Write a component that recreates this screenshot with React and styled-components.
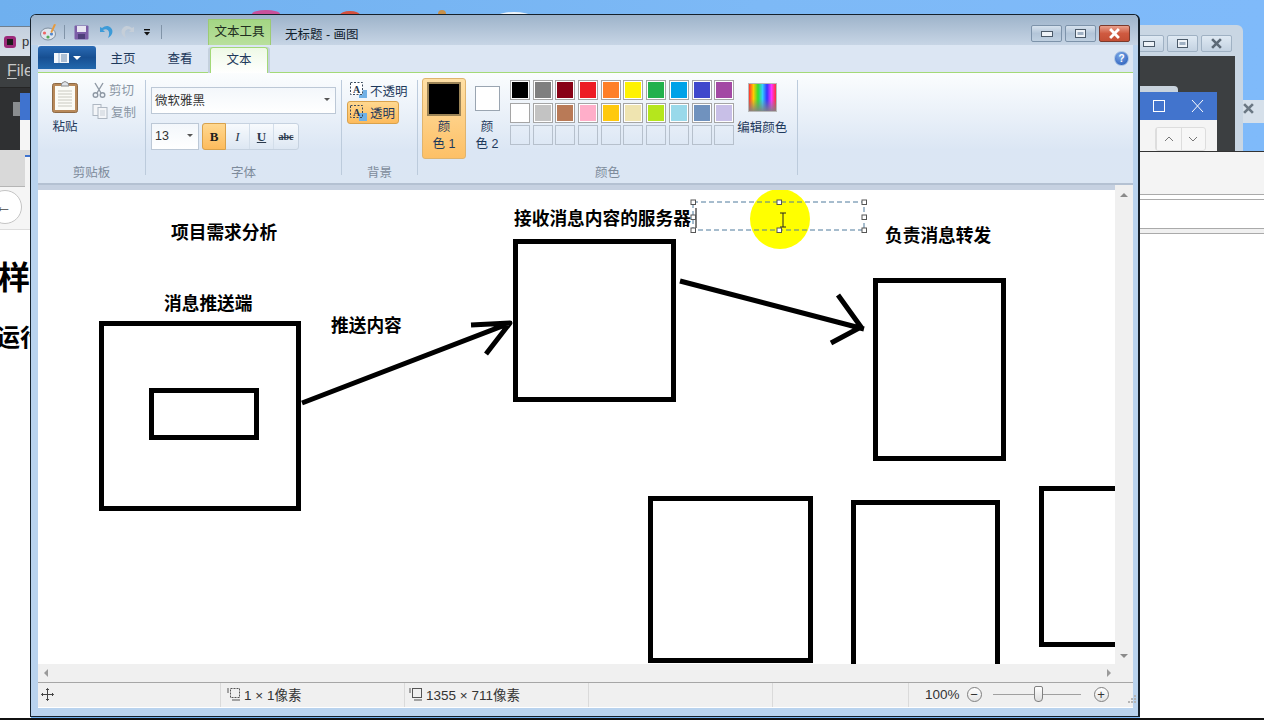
import React from 'react';
import styled, { createGlobalStyle } from 'styled-components';

const CJK = '"Liberation Sans", "Noto Sans CJK SC", sans-serif';

const GlobalStyle = createGlobalStyle`
  html, body { margin: 0; padding: 0; background: #7fb8f5; }
  body { font-family: ${CJK}; }
`;

const PALETTE = [
  ['#000000', '#7f7f7f', '#880015', '#ed1c24', '#ff7f27', '#fff200', '#22b14c', '#00a2e8', '#3f48cc', '#a349a4'],
  ['#ffffff', '#c3c3c3', '#b97a57', '#ffaec9', '#ffc90e', '#efe4b0', '#b5e61d', '#99d9ea', '#7092be', '#c8bfe7'],
  Array(10).fill(null),
];

const Desktop = styled.div`
  position: relative;
  width: 1264px;
  height: 720px;
  overflow: hidden;
  background: linear-gradient(90deg, #6fb0ef 0%, #7db9f6 60%, #7fbafa 100%);
`;

const BottomEdge = styled.div`
  position: absolute;
  left: 0;
  right: 0;
  bottom: 0;
  height: 2px;
  background: #111;
`;

/* windows lying behind paint */
const BackWindow = styled.div`
  position: absolute;
  left: ${(p) => p.$left}px;
  top: ${(p) => p.$top}px;
  width: ${(p) => p.$width}px;
  height: ${(p) => p.$height}px;
  background: ${(p) => p.$bg};
  border-radius: ${(p) => p.$radius || '0'};
  overflow: hidden;
`;

const LeftTitle = styled.div`
  height: 30px;
  box-sizing: border-box;
  display: flex;
  align-items: center;
  padding-left: 3px;
  gap: 5px;
  font-size: 13px;
  color: #333;
  background: linear-gradient(#c4d0de, #d8dfe8);
  border-top: 1px solid #6f7f8f;
`;

const LeftMenu = styled.div`
  height: 32px;
  box-sizing: border-box;
  background: #3c3f41;
  color: #c8c8c8;
  font-size: 16px;
  line-height: 30px;
  padding-left: 7px;
  border-bottom: 1px solid #252525;
  u { text-underline-offset: 2px; }
`;

const LeftToolbar = styled.div`
  height: 62px;
  background: #2f3032;
  display: flex;
  align-items: flex-start;
  padding: 5px 0 0 13px;
  box-sizing: border-box;
`;

const LeftChip = styled.div`
  width: 7px;
  height: 14px;
  margin-top: 9px;
  background: #8a8d90;
`;

const LeftBlue = styled.div`
  width: 11px;
  height: 57px;
  background: linear-gradient(#3f73cf 0 47%, #f5f5f5 47%);
`;

const LeftGray = styled.div`
  height: 37px;
  box-sizing: border-box;
  background: #d9d9d9;
  border-bottom: 1px solid #b5b5b5;
  padding: 5px 0 0 25px;
`;

const LeftGrayTab = styled.div`
  height: 100%;
  background: #f4f4f4;
  border-top: 2px solid #3f73cf;
`;

const LeftNav = styled.div`
  height: 43px;
  box-sizing: border-box;
  background: #f5f5f5;
  border-bottom: 1px solid #ddd;
  padding-top: 3px;
`;

const BackCircle = styled.div`
  width: 34px;
  height: 34px;
  margin-left: -12px;
  border: 1px solid #c4c4c4;
  border-radius: 50%;
  background: #fff;
  color: #444;
  font-size: 17px;
  display: flex;
  align-items: center;
  justify-content: flex-end;
  padding-right: 9px;
  box-sizing: border-box;
`;

const PageText = styled.div`
  margin: ${(p) => p.$top}px 0 0 ${(p) => p.$left}px;
  font-size: ${(p) => p.$size}px;
  line-height: 1;
  font-weight: 700;
  color: #000;
  white-space: nowrap;
`;

const RightButtons = styled.div`
  display: flex;
  gap: 3px;
  padding: 10px 0 0 0;
  margin-left: -7px;
`;

const GhostButton = styled.div`
  width: ${(p) => p.$w || 31}px;
  height: 17px;
  box-sizing: border-box;
  border: 1px solid #9fb1c3;
  border-radius: 2px;
  background: linear-gradient(#dfe9f3, #c3d2e1);
  display: flex;
  align-items: center;
  justify-content: center;
`;

const RightDark = styled.div`
  position: absolute;
  left: 0;
  top: 31px;
  width: 95px;
  height: 95px;
  background: #3c3f41;
`;

const RightTab = styled.div`
  position: absolute;
  left: 0;
  top: 61px;
  width: 38px;
  height: 6px;
  border-radius: 0 4px 0 0;
  background: #c9d3dd;
`;

const BlueBar = styled.div`
  position: absolute;
  left: 0;
  top: 67px;
  width: 77px;
  height: 28px;
  background: #4274cd;
  color: #fff;
`;

const RightTools = styled.div`
  position: absolute;
  left: 0;
  top: 95px;
  width: 77px;
  height: 31px;
  background: #f4f4f4;
`;

const SpinBox = styled.div`
  position: absolute;
  left: 15px;
  top: 7px;
  width: 51px;
  height: 24px;
  display: flex;
  box-sizing: border-box;
  border: 1px solid #ddd;
  border-radius: 3px;
  background: #f7f7f7;
`;

const SpinCell = styled.div`
  flex: 1;
  display: flex;
  align-items: center;
  justify-content: center;
  border-left: 1px solid #ddd;
`;

const RightLines = styled.div`
  height: 44px;
  box-sizing: border-box;
  background: #f4f4f4;
  border-top: 1px solid #333;
  border-bottom: 1px solid #aaa;
`;

const RightField = styled.div`
  height: 28px;
  background: #fff;
  border-top: 1px solid #aaa;
  margin-top: 4px;
  border-bottom: 1px solid #aaa;
`;

const RightFoot = styled.div`
  height: 4px;
  background: #f0f0f0;
  border-bottom: 1px solid #aaa;
`;

const Blob = styled.div`
  position: absolute;
  left: ${(p) => p.$left}px;
  top: ${(p) => p.$top}px;
  width: ${(p) => p.$w}px;
  height: 8px;
  border-radius: 50% 50% 0 0;
  background: ${(p) => p.$color};
`;

/* paint window */
const Frame = styled.div`
  position: absolute;
  left: 30px;
  top: 14px;
  width: 1110px;
  height: 703px;
  box-sizing: border-box;
  border: 1px solid #15212c;
  border-right-width: 2px;
  border-radius: 6px 6px 0 0;
  background: #b9d3ee;
  display: flex;
  flex-direction: column;
`;

const TitleBar = styled.div`
  height: 30px;
  flex: none;
  display: flex;
  border-radius: 5px 5px 0 0;
  background: linear-gradient(#9db3ca, #c7d5e5);
  font-size: 12.5px;
`;

const QuickAccess = styled.div`
  width: 177px;
  flex: none;
  display: flex;
  align-items: center;
  padding: 4px 0 0 9px;
  box-sizing: border-box;
`;

const QuickIcon = styled.span`
  display: inline-flex;
  flex: none;
  width: ${(p) => p.$w}px;
  margin-left: ${(p) => p.$ml || 0}px;
  justify-content: center;
`;

const QuickSep = styled.span`
  width: 1px;
  height: 14px;
  flex: none;
  margin: ${(p) => p.$m};
  background: #8194a8;
`;

const ToolTab = styled.div`
  align-self: flex-end;
  width: 63px;
  height: 26px;
  box-sizing: border-box;
  border: 1px solid #9ccb73;
  border-bottom: 0;
  background: linear-gradient(#a3d684, #b9e09d);
  color: #1f2f1f;
  text-align: center;
  line-height: 24px;
  flex: none;
`;

const WindowTitle = styled.div`
  margin: 9px 0 0 14px;
  color: #10202c;
  white-space: nowrap;
  flex: 1;
`;

const WindowButtons = styled.div`
  display: flex;
  gap: 3px;
  padding: 10px 8px 0 0;
`;

const WinButton = styled.div`
  width: 31px;
  height: 17px;
  box-sizing: border-box;
  border: 1px solid ${(p) => (p.$close ? '#7c3a2c' : '#7d93aa')};
  border-radius: 2px;
  background: ${(p) =>
    p.$close
      ? 'linear-gradient(#e9a08c, #cf5a40 50%, #c44f35)'
      : 'linear-gradient(#d6e2ee, #b3c5d8 50%, #bfd0e1)'};
  display: flex;
  align-items: center;
  justify-content: center;
`;

const Body = styled.div`
  flex: 1;
  display: flex;
  flex-direction: column;
  padding: 0 5px 8px 7px;
  min-height: 0;
`;

const TabRow = styled.div`
  height: 27px;
  flex: none;
  display: flex;
  align-items: flex-end;
  background: #dce6f3;
  border-bottom: 1px solid #a3d977;
  font-size: 12.5px;
  color: #1e395b;
  position: relative;
`;

const FileButton = styled.div`
  width: 58px;
  height: 23px;
  align-self: flex-start;
  margin-top: 1px;
  border-radius: 3px 3px 0 0;
  background: linear-gradient(#2a6bb5, #174f92 50%, #2268ad);
  display: flex;
  align-items: center;
  justify-content: center;
  gap: 4px;
  flex: none;
`;

const Tab = styled.div`
  width: ${(p) => p.$w}px;
  height: 25px;
  box-sizing: border-box;
  text-align: center;
  line-height: 25px;
  flex: none;
  ${(p) =>
    p.$active &&
    `
    height: 26px;
    margin-bottom: -1px;
    background: linear-gradient(#eef9e6, #fff);
    border: 1px solid #a3d977;
    border-bottom: 0;
    border-radius: 3px 3px 0 0;
    box-shadow: -2px 0 0 #c4d0de, 2px 0 0 #c4d0de;
  `}
`;

const HelpDot = styled.div`
  position: absolute;
  right: 4px;
  top: 6px;
  width: 15px;
  height: 15px;
  border-radius: 50%;
  border: 1px solid #a9c4e6;
  box-sizing: border-box;
  background: radial-gradient(circle at 40% 30%, #7ea9e8, #1f55b5);
  color: #fff;
  font-size: 10px;
  font-weight: 700;
  line-height: 13px;
  text-align: center;
`;

const Ribbon = styled.div`
  height: 112px;
  flex: none;
  display: flex;
  background: linear-gradient(#fbfdfe, #dbe6f4 70%, #dbe6f3);
  border-bottom: 2px solid #b4c1d2;
  box-sizing: border-box;
  font-size: 12.5px;
  color: #1e395b;
`;

const Group = styled.div`
  width: ${(p) => p.$w}px;
  flex: none;
  box-sizing: border-box;
  margin: 7px 0 8px 0;
  border-right: 1px solid #bccbdc;
  display: flex;
  flex-direction: column;
`;

const GroupBody = styled.div`
  flex: 1;
  display: flex;
  min-height: 0;
  padding: ${(p) => p.$pad || '0'};
`;

const GroupLabel = styled.div`
  height: 16px;
  line-height: 16px;
  text-align: center;
  color: #7d8b9b;
  flex: none;
  margin-bottom: -6px;
`;

const PasteButton = styled.div`
  width: 54px;
  flex: none;
  display: flex;
  flex-direction: column;
  align-items: center;
  padding-top: 1px;
  gap: 3px;
`;

const SmallActions = styled.div`
  display: flex;
  flex-direction: column;
  gap: 5px;
  padding-top: 1px;
`;

const SmallAction = styled.div`
  height: 17px;
  display: flex;
  align-items: center;
  gap: 3px;
  color: #8a96a4;
  white-space: nowrap;
`;

const FontColumn = styled.div`
  display: flex;
  flex-direction: column;
  gap: 9px;
  padding: 7px 0 0 5px;
`;

const FontSelect = styled.div`
  width: ${(p) => p.$w}px;
  height: 27px;
  box-sizing: border-box;
  border: 1px solid #bcc8d6;
  background: linear-gradient(#f3f7fb, #ffffff);
  display: flex;
  align-items: center;
  justify-content: space-between;
  padding: 0 5px 2px 3px;
  color: #333;
  &::after {
    content: '';
    border-left: 3px solid transparent;
    border-right: 3px solid transparent;
    border-top: 3px solid #555;
  }
`;

const FontRow = styled.div`
  display: flex;
  gap: 3px;
`;

const StyleButtons = styled.div`
  display: flex;
  height: 25px;
  border: 1px solid #c6d2e0;
  border-radius: 3px;
  background: linear-gradient(#f7fafd, #dde7f3);
`;

const StyleButton = styled.div`
  width: 24px;
  display: flex;
  align-items: center;
  justify-content: center;
  box-sizing: border-box;
  font-family: "Liberation Serif", serif;
  font-size: ${(p) => p.$size || 13}px;
  font-weight: ${(p) => (p.$italic ? 400 : 700)};
  font-style: ${(p) => (p.$italic ? 'italic' : 'normal')};
  text-decoration: ${(p) => p.$line || 'none'};
  color: #2b3a4d;
  border-right: 1px solid #d3deea;
  &:last-child { border-right: 0; }
  ${(p) =>
    p.$on &&
    `
    background: linear-gradient(#ffd890, #fdbb5c);
    border: 1px solid #d9a24c;
    border-radius: 3px 0 0 3px;
    margin: -1px 0 -1px -1px;
    color: #1d1d1d;
  `}
`;

const OpacityColumn = styled.div`
  display: flex;
  flex-direction: column;
  gap: 2px;
  padding-left: 5px;
`;

const OpacityOption = styled.div`
  width: 52px;
  height: ${(p) => (p.$on ? 23 : 18)}px;
  box-sizing: border-box;
  display: flex;
  align-items: center;
  gap: 3px;
  white-space: nowrap;
  padding-left: ${(p) => (p.$on ? 2 : 3)}px;
  svg { flex: none; }
  ${(p) =>
    p.$on &&
    `
    background: linear-gradient(#ffd890, #fdbb5c);
    border: 1px solid #d9a24c;
    border-radius: 3px;
  `}
`;

const ColorButton = styled.div`
  width: ${(p) => (p.$on ? 44 : 30)}px;
  height: 81px;
  margin: -2px ${(p) => (p.$on ? 6 : 8)}px 0 ${(p) => (p.$on ? 4 : 0)}px;
  box-sizing: border-box;
  flex: none;
  display: flex;
  flex-direction: column;
  align-items: center;
  text-align: center;
  line-height: 17px;
  padding-top: ${(p) => (p.$on ? 3 : 8)}px;
  border-radius: 3px;
  color: #1e395b;
  ${(p) =>
    p.$on &&
    `
    background: linear-gradient(#ffe0a6, #fdc066);
    border: 1px solid #dfb46f;
  `}
`;

const ColorPreview = styled.div`
  width: ${(p) => p.$size}px;
  height: ${(p) => p.$size}px;
  flex: none;
  box-sizing: border-box;
  background: ${(p) => p.$color};
  border: ${(p) => (p.$on ? '2px solid #9c8456' : '1px solid #9aa5b1')};
  margin-bottom: ${(p) => (p.$on ? 3 : 8)}px;
`;

const SwatchGrid = styled.div`
  display: grid;
  grid-template-columns: repeat(10, 20px);
  grid-auto-rows: 20px;
  gap: 2.7px;
  flex: none;
  align-self: flex-start;
`;

const Swatch = styled.div`
  box-sizing: border-box;
  border: 1px solid ${(p) => (p.$color ? '#a5a5a5' : '#b6c0cc')};
  background: ${(p) => p.$color || 'transparent'};
  box-shadow: ${(p) => (p.$color ? 'inset 0 0 0 1px #fff' : 'none')};
`;

const EditColor = styled.div`
  display: flex;
  flex-direction: column;
  align-items: center;
  gap: 5px;
  margin: 3px 0 0 3px;
  white-space: nowrap;
`;

const RainbowBox = styled.div`
  width: 29px;
  height: 29px;
  box-sizing: border-box;
  border: 1px solid #b8b8b8;
  background:
    linear-gradient(rgba(255, 255, 255, 0) 55%, rgba(130, 130, 130, 0.9)),
    linear-gradient(90deg, #f33, #fc0, #3d3, #3cf, #33f, #f3f, #f33);
`;

const WorkRow = styled.div`
  flex: 1;
  min-height: 0;
  display: flex;
  background: #c6d1e1;
  padding-top: 5px;
`;

const CanvasWrap = styled.div`
  flex: 1;
  background: #fff;
  overflow: hidden;
  position: relative;
`;

const CanvasSvg = styled.svg`
  display: block;
`;

const CanvasLabel = styled.div`
  position: absolute;
  left: ${(p) => p.$x - 38}px;
  top: ${(p) => p.$y - 190}px;
  font-size: 17.7px;
  line-height: 24px;
  font-weight: 700;
  color: #000;
  white-space: nowrap;
  font-family: "Noto Sans CJK SC", sans-serif;
`;

const VScroll = styled.div`
  width: 18px;
  margin-top: -5px;
  flex: none;
  background: #f0f0f0;
  display: flex;
  flex-direction: column;
  justify-content: space-between;
  align-items: center;
  padding: 8px 0 6px;
  box-sizing: border-box;
`;

const HScroll = styled.div`
  height: 18px;
  flex: none;
  background: #f0f0f0;
  display: flex;
  justify-content: space-between;
  align-items: center;
  padding: 0 22px 0 6px;
`;

const Arrow = styled.span`
  width: 0;
  height: 0;
  border-style: solid;
  border-color: transparent;
  ${(p) => (p.$dir === 'up' ? 'border-width: 0 4px 4px; border-bottom-color: #8a8a8a;' : '')}
  ${(p) => (p.$dir === 'down' ? `border-width: 4px 4px 0; border-top-color: ${p.$color || '#8a8a8a'};` : '')}
  ${(p) => (p.$dir === 'left' ? 'border-width: 4px 4px 4px 0; border-right-color: #9a9a9a;' : '')}
  ${(p) => (p.$dir === 'right' ? 'border-width: 4px 0 4px 4px; border-left-color: #9a9a9a;' : '')}
`;

const StatusBar = styled.div`
  height: 26px;
  flex: none;
  display: flex;
  box-sizing: border-box;
  background: #f0f0f0;
  border-top: 1px solid #a6a6a6;
  border-bottom: 1px solid #fff;
  font-size: 13.5px;
  color: #333;
`;

const StatusCell = styled.div`
  width: ${(p) => p.$w}px;
  flex: ${(p) => (p.$w ? 'none' : 1)};
  box-sizing: border-box;
  border-right: ${(p) => (p.$w ? '1px solid #dadada' : '0')};
  display: flex;
  align-items: center;
  gap: ${(p) => (p.$tight ? 0 : 3)}px;
  padding: 0 0 2px ${(p) => p.$pad || 6}px;
  white-space: nowrap;
`;

const ZoomButton = styled.div`
  width: 15px;
  height: 15px;
  margin-left: ${(p) => p.$ml || 0}px;
  box-sizing: border-box;
  border: 1px solid #808080;
  border-radius: 50%;
  display: flex;
  align-items: center;
  justify-content: center;
  color: #333;
  font-size: 13px;
  line-height: 1;
  background: linear-gradient(#fff, #e4e4e4);
  flex: none;
`;

const ZoomTrack = styled.div`
  width: 88px;
  height: 1px;
  margin: 0 13px 0 11px;
  background: #a0a0a0;
  position: relative;
  flex: none;
`;

const ZoomThumb = styled.div`
  position: absolute;
  left: 41px;
  top: -8px;
  width: 9px;
  height: 16px;
  box-sizing: border-box;
  border: 1px solid #808080;
  border-radius: 2px 2px 4px 4px;
  background: linear-gradient(#fff, #ddd);
`;

const SizeGrip = styled.svg`
  margin: 10px 0 0 19px;
  flex: none;
`;

/* small drawings */
const PaintIcon = () => (
  <svg width="18" height="18" viewBox="0 0 18 18">
    <ellipse cx="8" cy="11" rx="7.5" ry="6" fill="#dfe6ee" stroke="#7f8f9f" />
    <circle cx="4.5" cy="10" r="1.6" fill="#e66" />
    <circle cx="8" cy="14" r="1.6" fill="#5a5" />
    <circle cx="11.5" cy="11" r="1.6" fill="#58c" />
    <path d="M14 1 L16 1.5 L12 10 L10.5 9 Z" fill="#e79a3c" />
  </svg>
);

const SaveIcon = () => (
  <svg width="15" height="15" viewBox="0 0 15 15">
    <rect x="0.5" y="0.5" width="14" height="14" rx="1" fill="#7c5ea7" />
    <rect x="3" y="1" width="9" height="6" fill="#e8e6f2" />
    <rect x="4" y="9" width="7" height="5" fill="#4e3f7a" />
  </svg>
);

const UndoIcon = ({ color, flip }) => (
  <svg width="15" height="14" viewBox="0 0 15 14" style={flip ? { transform: 'scaleX(-1)' } : undefined}>
    <path d="M1 2 L1 7 L6 7 L4 5 C7 3 11 5 10 10 L9 13 C13 11 15 6 12 3 C9 0 6 1 3 3 Z" fill={color} />
  </svg>
);

const Caret = () => (
  <svg width="8" height="7" viewBox="0 0 8 7">
    <rect x="1" y="0" width="6" height="1.4" fill="#111" />
    <path d="M1 3 L7 3 L4 6.5 Z" fill="#111" />
  </svg>
);

const ClipboardIcon = () => (
  <svg width="26" height="32" viewBox="0 0 26 32">
    <rect x="0.5" y="2.5" width="25" height="29" rx="2" fill="#b8895a" stroke="#8e6a45" />
    <rect x="3" y="5" width="20" height="24" fill="#fbfbf6" />
    <path d="M6 10H20M6 13H20M6 16H20M6 19H20M6 22H20M6 25H20" stroke="#c9c9c0" />
    <path d="M9 5 L10 2 L13 0.5 L16 2 L17 5 Z" fill="#dfe3e8" stroke="#8a8a8a" />
  </svg>
);

const ScissorsIcon = () => (
  <svg width="14" height="16" viewBox="0 0 14 16" fill="none" stroke="#8f99a5" strokeWidth="1.4">
    <path d="M3 1 L9 11 M11 1 L5 11" />
    <circle cx="3.5" cy="13" r="2.3" />
    <circle cx="10.5" cy="13" r="2.3" />
  </svg>
);

const CopyIcon = () => (
  <svg width="16" height="15" viewBox="0 0 16 15" fill="#f3f5f8" stroke="#aeb7c2">
    <rect x="1" y="0.5" width="8" height="11" />
    <rect x="6" y="3.5" width="9" height="11" />
    <path d="M8 7H13M8 9H13M8 11H13" stroke="#c9d0d8" />
  </svg>
);

const OpacityIcon = ({ solid }) => (
  <svg width="17" height="16" viewBox="0 0 17 16">
    <rect x="9" y="8" width="8" height="8" fill="#6fb0e6" />
    <rect x="0.5" y="0.5" width="12" height="12" fill={solid ? '#fff' : 'none'} stroke="#3b4a5c" strokeDasharray="2 1.5" />
    <text x="3" y="10.5" fontSize="10" fontWeight="700" fontFamily="Liberation Serif, serif" fill="#27364a">A</text>
  </svg>
);

const GlyphX = ({ color = '#44505c', size = 10, width = 2 }) => (
  <svg width={size} height={size} viewBox="0 0 10 10">
    <path d="M1 1 L9 9 M9 1 L1 9" stroke={color} strokeWidth={width} fill="none" />
  </svg>
);

const GlyphMin = () => (
  <svg width="12" height="6" viewBox="0 0 12 6">
    <rect x="0.5" y="0.5" width="11" height="5" fill="#eef3f8" stroke="#4b5a69" />
  </svg>
);

const GlyphMax = () => (
  <svg width="11" height="9" viewBox="0 0 11 9">
    <rect x="0.5" y="0.5" width="10" height="8" fill="#eef3f8" stroke="#4b5a69" />
    <rect x="2.5" y="3" width="6" height="3" fill="#9fb0c2" />
  </svg>
);

const Chevron = ({ up }) => (
  <svg width="10" height="6" viewBox="0 0 10 6" fill="none" stroke="#777">
    <path d={up ? 'M1 5 L5 1 L9 5' : 'M1 1 L5 5 L9 1'} />
  </svg>
);

const SizeIcon = ({ filled }) => (
  <svg width="14" height="14" viewBox="0 0 14 14" fill="none" stroke="#555">
    <rect x="3.5" y="1.5" width="9" height="9" strokeDasharray={filled ? 'none' : '2 1'} />
    <path d="M1 1V6M5 13H13" />
  </svg>
);

const HANDLES = [
  [693, 202], [779, 202], [864, 202],
  [693, 217], [864, 217],
  [693, 230], [779, 230], [864, 230],
];

const LABELS = [
  { x: 171, y: 219, text: '项目需求分析' },
  { x: 164, y: 290, text: '消息推送端' },
  { x: 331, y: 312, text: '推送内容' },
  { x: 514, y: 205, text: '接收消息内容的服务器' },
  { x: 885, y: 222, text: '负责消息转发' },
];

const Drawing = () => (
  <CanvasSvg width="1077" height="474" viewBox="38 190 1077 474">
    <circle cx="780" cy="219" r="30" fill="#ffff00" />
    <g fill="none" stroke="#000" strokeWidth="5">
      <rect x="101.5" y="323.5" width="197" height="185" />
      <rect x="151.5" y="390.5" width="105" height="47" />
      <rect x="515.5" y="241.5" width="158" height="158" />
      <rect x="875.5" y="280.5" width="128" height="178" />
      <rect x="650.5" y="498.5" width="160" height="162" />
      <rect x="853.5" y="502.5" width="144" height="180" />
      <rect x="1041.5" y="488.5" width="120" height="156" />
      <path d="M302 403 L510 323 M471 325 L510 323 L486 354" strokeLinejoin="round" />
      <path d="M680 281 L864 329 M838 295 L861 327 L831 343" strokeLinejoin="round" />
    </g>
    <rect x="693" y="202" width="171" height="28" fill="none" stroke="#4f7a9c" strokeDasharray="5 3" />
    <path d="M696 208 V228" stroke="#000" strokeWidth="1" />
    {HANDLES.map(([x, y]) => (
      <rect key={`${x}-${y}`} x={x - 2} y={y - 2} width="4.5" height="4.5" fill="#fff" stroke="#555" />
    ))}
    <path d="M780 213 H786 M783 213 V227 M780 227 H786" stroke="#222" strokeWidth="1" fill="none" />
  </CanvasSvg>
);

const App = () => (
  <Desktop>
    <GlobalStyle />
    <Blob $left={252} $top={10} $w={28} $color="#c9509a" />
    <Blob $left={340} $top={11} $w={20} $color="#d5503c" />
    <Blob $left={438} $top={10} $w={8} $color="#c89048" />
    <Blob $left={498} $top={12} $w={32} $color="#eef3f8" />

    <BackWindow $left={0} $top={26} $width={31} $height={692} $bg="#ffffff">
      <LeftTitle>
        <svg width="14" height="14" viewBox="0 0 14 14" style={{ flex: 'none' }}>
          <rect x="1" y="1" width="12" height="12" rx="3" fill="#9c2a7a" />
          <rect x="4" y="4" width="6" height="6" fill="#1b1b1b" />
        </svg>
        p
      </LeftTitle>
      <LeftMenu>
        <u>F</u>ile
      </LeftMenu>
      <LeftToolbar>
        <LeftChip />
        <LeftBlue />
      </LeftToolbar>
      <LeftGray>
        <LeftGrayTab />
      </LeftGray>
      <LeftNav>
        <BackCircle>←</BackCircle>
      </LeftNav>
      <PageText $top={32} $left={-2} $size={32}>样式</PageText>
      <PageText $top={32} $left={-4} $size={24}>运行</PageText>
    </BackWindow>

    <BackWindow $left={1140} $top={25} $width={103} $height={126} $bg="#c9d6e3" $radius="0 6px 0 0">
      <RightButtons>
        <GhostButton $w={31}><GlyphMin /></GhostButton>
        <GhostButton $w={31}><GlyphMax /></GhostButton>
        <GhostButton $w={31}><GlyphX color="#5d6a77" size={11} width={2.4} /></GhostButton>
      </RightButtons>
      <RightDark />
      <RightTab />
      <BlueBar>
        <svg width="77" height="28" viewBox="0 0 77 28" fill="none" stroke="#fff">
          <rect x="13.5" y="8.5" width="11" height="11" />
          <path d="M52 8 L63 20 M63 8 L52 20" />
        </svg>
      </BlueBar>
      <RightTools>
        <SpinBox>
          <SpinCell><Chevron up /></SpinCell>
          <SpinCell><Chevron /></SpinCell>
        </SpinBox>
      </RightTools>
    </BackWindow>

    <BackWindow $left={1243} $top={100} $width={21} $height={23} $bg="#d6e0ea">
      <GlyphX color="#6a7783" size={11} width={2.4} />
    </BackWindow>

    <BackWindow $left={1140} $top={151} $width={124} $height={567} $bg="#ffffff">
      <RightLines />
      <RightField />
      <RightFoot />
    </BackWindow>

    <BottomEdge />

    <Frame>
      <TitleBar>
        <QuickAccess>
          <QuickIcon $w={18}><PaintIcon /></QuickIcon>
          <QuickSep $m="0 9px 0 6px" />
          <QuickIcon $w={15}><SaveIcon /></QuickIcon>
          <QuickIcon $w={24} $ml={5}><UndoIcon color="#3d9bd8" /></QuickIcon>
          <QuickIcon $w={18}><UndoIcon color="#c5ced8" flip /></QuickIcon>
          <QuickIcon $w={22}><Caret /></QuickIcon>
          <QuickSep $m="0 0 0 3px" />
        </QuickAccess>
        <ToolTab>文本工具</ToolTab>
        <WindowTitle>无标题 - 画图</WindowTitle>
        <WindowButtons>
          <WinButton><GlyphMin /></WinButton>
          <WinButton><GlyphMax /></WinButton>
          <WinButton $close><GlyphX color="#fff" size={11} width={2.6} /></WinButton>
        </WindowButtons>
      </TitleBar>

      <Body>
        <TabRow>
          <FileButton>
            <svg width="15" height="10" viewBox="0 0 15 10">
              <rect width="15" height="10" fill="#f4f7fb" />
              <path d="M5 0 V10" stroke="#9fb6d2" />
              <path d="M7 2H13M7 4H13M7 6H13M7 8H13" stroke="#6787ad" />
            </svg>
            <Arrow $dir="down" $color="#fff" />
          </FileButton>
          <Tab $w={54}>主页</Tab>
          <Tab $w={60}>查看</Tab>
          <Tab $w={58} $active>文本</Tab>
          <HelpDot>?</HelpDot>
        </TabRow>

        <Ribbon>
          <Group $w={108}>
            <GroupBody>
              <PasteButton>
                <ClipboardIcon />
                粘贴
              </PasteButton>
              <SmallActions>
                <SmallAction><ScissorsIcon />剪切</SmallAction>
                <SmallAction><CopyIcon />复制</SmallAction>
              </SmallActions>
            </GroupBody>
            <GroupLabel>剪贴板</GroupLabel>
          </Group>

          <Group $w={196}>
            <GroupBody>
              <FontColumn>
                <FontSelect $w={185}>微软雅黑</FontSelect>
                <FontRow>
                  <FontSelect $w={48}>13</FontSelect>
                  <StyleButtons>
                    <StyleButton $on>B</StyleButton>
                    <StyleButton $italic>I</StyleButton>
                    <StyleButton $line="underline">U</StyleButton>
                    <StyleButton $size={10} $line="line-through">abc</StyleButton>
                  </StyleButtons>
                </FontRow>
              </FontColumn>
            </GroupBody>
            <GroupLabel>字体</GroupLabel>
          </Group>

          <Group $w={76}>
            <GroupBody $pad="1px 0 0 0">
              <OpacityColumn>
                <OpacityOption><OpacityIcon solid />不透明</OpacityOption>
                <OpacityOption $on><OpacityIcon />透明</OpacityOption>
              </OpacityColumn>
            </GroupBody>
            <GroupLabel>背景</GroupLabel>
          </Group>

          <Group $w={380}>
            <GroupBody>
              <ColorButton $on>
                <ColorPreview $on $size={34} $color="#000" />
                颜<br />色 1
              </ColorButton>
              <ColorButton>
                <ColorPreview $size={25} $color="#fff" />
                颜<br />色 2
              </ColorButton>
              <SwatchGrid>
                {PALETTE.flat().map((color, i) => (
                  <Swatch key={i} $color={color} />
                ))}
              </SwatchGrid>
              <EditColor>
                <RainbowBox />
                编辑颜色
              </EditColor>
            </GroupBody>
            <GroupLabel>颜色</GroupLabel>
          </Group>
        </Ribbon>

        <WorkRow>
          <CanvasWrap>
            <Drawing />
            {LABELS.map((label) => (
              <CanvasLabel key={label.text} $x={label.x} $y={label.y}>
                {label.text}
              </CanvasLabel>
            ))}
          </CanvasWrap>
          <VScroll>
            <Arrow $dir="up" />
            <Arrow $dir="down" />
          </VScroll>
        </WorkRow>

        <HScroll>
          <Arrow $dir="left" />
          <Arrow $dir="right" />
        </HScroll>

        <StatusBar>
          <StatusCell $w={183} $pad={3}>
            <svg width="13" height="13" viewBox="0 0 13 13" fill="none" stroke="#444">
              <path d="M6.5 0.5V12.5M0.5 6.5H12.5M5 2L6.5 0.5L8 2M5 11L6.5 12.5L8 11M2 5L0.5 6.5L2 8M11 5L12.5 6.5L11 8" />
            </svg>
          </StatusCell>
          <StatusCell $w={184}><SizeIcon /> 1 × 1像素</StatusCell>
          <StatusCell $w={184} $pad={4}><SizeIcon filled /> 1355 × 711像素</StatusCell>
          <StatusCell $w={184} />
          <StatusCell $w={136} />
          <StatusCell $pad={16} $tight>
            100%
            <ZoomButton $ml={7}>−</ZoomButton>
            <ZoomTrack><ZoomThumb /></ZoomTrack>
            <ZoomButton>+</ZoomButton>
            <SizeGrip width="8" height="8" viewBox="0 0 8 8" fill="#b5b5b5">
              <rect x="6" y="0" width="2" height="2" />
              <rect x="3" y="3" width="2" height="2" />
              <rect x="6" y="3" width="2" height="2" />
              <rect x="0" y="6" width="2" height="2" />
              <rect x="3" y="6" width="2" height="2" />
              <rect x="6" y="6" width="2" height="2" />
            </SizeGrip>
          </StatusCell>
        </StatusBar>
      </Body>
    </Frame>
  </Desktop>
);

export default App;
